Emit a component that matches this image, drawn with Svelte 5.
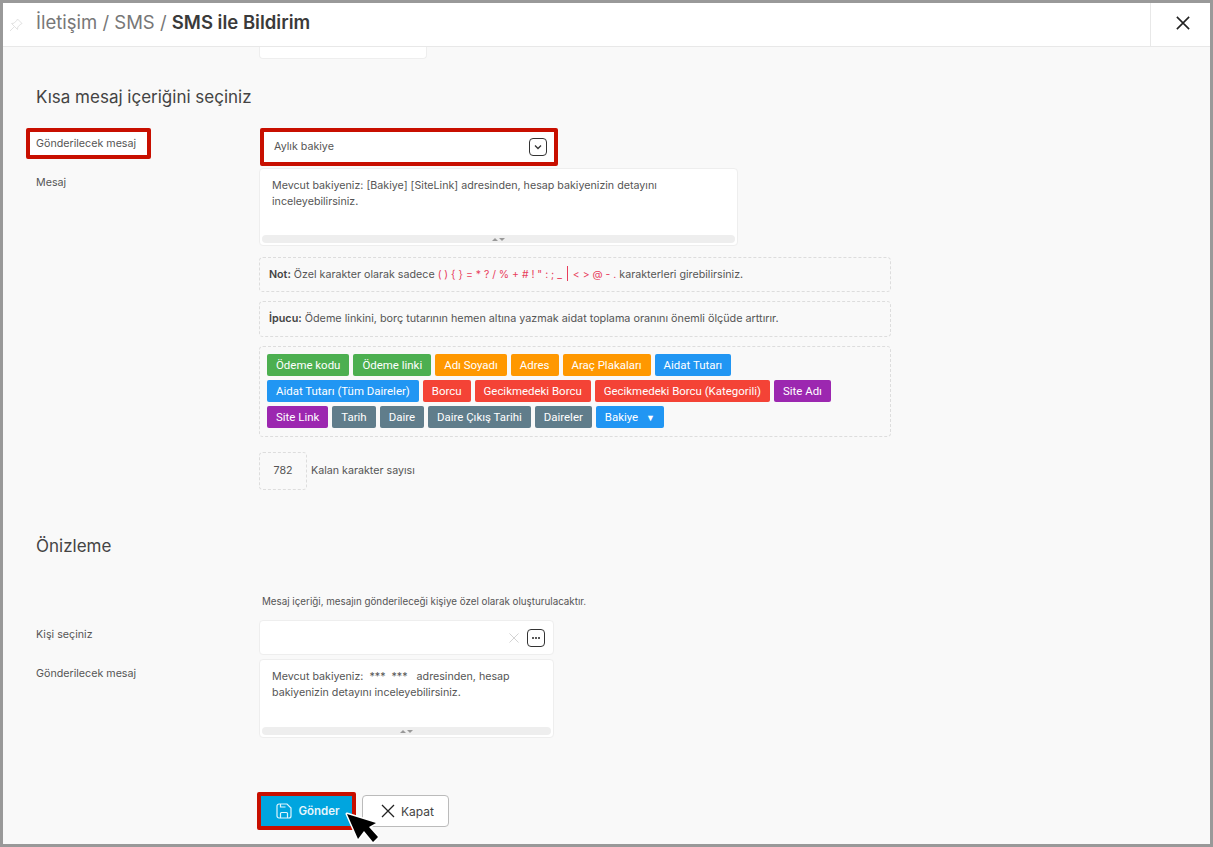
<script>
    const tags = [
        ['Ödeme kodu', 'green'], ['Ödeme linki', 'green'], ['Adı Soyadı', 'orange'], ['Adres', 'orange'],
        ['Araç Plakaları', 'orange'], ['Aidat Tutarı', 'blue'], ['Aidat Tutarı (Tüm Daireler)', 'blue'],
        ['Borcu', 'red'], ['Gecikmedeki Borcu', 'red'], ['Gecikmedeki Borcu (Kategorili)', 'red'],
        ['Site Adı', 'purple'], ['Site Link', 'purple'], ['Tarih', 'slate'], ['Daire', 'slate'],
        ['Daire Çıkış Tarihi', 'slate'], ['Daireler', 'slate']
    ];
</script>

<div class="window">
    <header class="head">
        <svg class="pin" width="14" height="14" viewBox="0 0 14 14" fill="none" stroke="#e2e2e2" stroke-width="1">
            <path d="M8.5 1 13 5.5 11.8 6 8.8 9 8.5 11.5 2.5 5.5 5 5.2 8 2.2Z M5 9 1 13" />
        </svg>
        <h1>İletişim / SMS / <b>SMS ile Bildirim</b></h1>
        <button class="close" aria-label="Kapat">
            <svg width="14" height="14" viewBox="0 0 16 16" stroke="#222" stroke-width="1.8"><path d="M1 1 15 15M15 1 1 15" /></svg>
        </button>
    </header>

    <main class="body">
        <div class="stub"></div>
        <h2 class="first">Kısa mesaj içeriğini seçiniz</h2>

        <div class="row top">
            <span class="lbl mark">Gönderilecek mesaj</span>
            <div class="select">
                <span>Aylık bakiye</span>
                <span class="ico">
                    <svg width="10" height="10" viewBox="0 0 10 10" fill="none" stroke="#333" stroke-width="1.3"><path d="M2 3.5 5 6.5 8 3.5" /></svg>
                </span>
            </div>
        </div>

        <div class="row">
            <span class="lbl">Mesaj</span>
            <div class="col">
                <div class="area wide">
                    <p>Mevcut bakiyeniz: [Bakiye] [SiteLink] adresinden, hesap bakiyenizin detayını inceleyebilirsiniz.</p>
                    <div class="grip"><i></i><i class="down"></i></div>
                </div>
                <div class="dash note"><b>Not:</b> Özel karakter olarak sadece <span class="code">( ) {'{ }'} = * ? / % + # ! " : ; _ <span class="bar"></span> &lt; &gt; @ - .</span> karakterleri girebilirsiniz.</div>
                <div class="dash note tip"><b>İpucu:</b> Ödeme linkini, borç tutarının hemen altına yazmak aidat toplama oranını önemli ölçüde arttırır.</div>
                <div class="dash tags">
                    {#each tags as [name, color]}
                        <span class="tag {color}">{name}</span>
                    {/each}
                    <span class="tag blue">Bakiye <em>▼</em></span>
                </div>
                <div class="count">
                    <div class="dash num">782</div>
                    <span>Kalan karakter sayısı</span>
                </div>
            </div>
        </div>

        <h2 class="second">Önizleme</h2>

        <div class="row">
            <span></span>
            <small>Mesaj içeriği, mesajın gönderileceği kişiye özel olarak oluşturulacaktır.</small>
        </div>

        <div class="row person">
            <span class="lbl">Kişi seçiniz</span>
            <div class="input">
                <svg width="10" height="10" viewBox="0 0 11 11" stroke="#d4d4d4" stroke-width="1.1"><path d="M.5.5 10.5 10.5M10.5.5.5 10.5" /></svg>
                <span class="ico dots"><i></i><i></i><i></i></span>
            </div>
        </div>

        <div class="row preview">
            <span class="lbl">Gönderilecek mesaj</span>
            <div class="area narrow">
                <p>Mevcut bakiyeniz: &nbsp;*** &nbsp;*** &nbsp;&nbsp;adresinden, hesap bakiyenizin detayını inceleyebilirsiniz.</p>
                <div class="grip"><i></i><i class="down"></i></div>
            </div>
        </div>

        <div class="row actions">
            <span></span>
            <div class="btns">
                <button class="send">
                    <svg width="16" height="16" viewBox="0 0 16 16" fill="none" stroke="#e0f5fd" stroke-width="1.2">
                        <path d="M3 1h8l4 4v8a2 2 0 0 1-2 2H3a2 2 0 0 1-2-2V3a2 2 0 0 1 2-2Z" />
                        <path d="M4.5 15v-4.5a1 1 0 0 1 1-1h5a1 1 0 0 1 1 1V15M4.5 1v3h5" />
                    </svg>
                    Gönder
                </button>
                <button class="shut">
                    <svg width="14" height="14" viewBox="0 0 14 14" stroke="#222" stroke-width="1.3"><path d="M1 1 13 13M13 1 1 13" /></svg>
                    Kapat
                </button>
            </div>
        </div>
    </main>

    <svg class="cursor" width="45" height="42" viewBox="0 0 45 42">
        <path d="M7 9 18 34 24 26 33 37 38 32 29 22 36 18Z" fill="#000" stroke="#fff" stroke-width="3" stroke-linejoin="round" paint-order="stroke" />
    </svg>
</div>

<style>
:global(body) {
    margin: 0;
}
.window {
    position: relative;
    box-sizing: border-box;
    width: 1213px;
    height: 847px;
    border: 3px solid #999;
    background: #f9f9f9;
    overflow: hidden;
    font-family: Inter, "Liberation Sans", sans-serif;
    font-size: 10.7px;
    color: #555;
}
.head {
    display: flex;
    align-items: center;
    height: 44px;
    box-sizing: border-box;
    background: #fff;
    border-bottom: 1px solid #e8e8e8;
}
.pin {
    margin: 0 13px 0 6px;
}
h1 {
    flex: 1;
    margin: 0 0 5px;
    font-size: 18.5px;
    font-weight: 400;
    color: #777;
}
h1 b {
    font-weight: 600;
    color: #3a3a3a;
}
.close {
    width: 60px;
    height: 43px;
    padding: 0 0 0 4px;
    background: none;
    border: none;
    border-left: 1px solid #e8e8e8;
}
.body {
    padding-left: 33px;
}
.stub {
    box-sizing: border-box;
    width: 168px;
    height: 12px;
    margin-left: 223px;
    background: #fff;
    border: 1px solid #eee;
    border-top: none;
    border-radius: 0 0 4px 4px;
}
h2 {
    margin: 0;
    font-size: 17px;
    font-weight: 400;
    color: #444;
    line-height: 20px;
}
.first {
    margin-top: 28px;
    margin-bottom: 21px;
}
.second {
    margin-top: 46px;
    margin-bottom: 40px;
}
.row {
    display: grid;
    grid-template-columns: 223px auto;
    justify-content: start;
}
.lbl {
    padding-top: 8px;
    line-height: 14px;
}
.top {
    margin-bottom: 2px;
}
.mark {
    box-sizing: content-box;
    align-self: start;
    justify-self: start;
    height: 14px;
    margin-left: -10px;
    padding: 5px 11px 4px 6px;
    border: 4px solid #c80f00;
    border-radius: 2px;
    background: #fff;
}
.select {
    box-sizing: border-box;
    display: flex;
    align-items: center;
    justify-content: space-between;
    width: 298px;
    height: 38px;
    margin-left: 1px;
    padding: 0 7px 0 9px;
    background: #fff;
    border: 4px solid #c80f00;
    border-radius: 2px;
}
.select > span:first-child {
    margin: 0 0 2px 1px;
}
.ico {
    box-sizing: border-box;
    display: flex;
    align-items: center;
    justify-content: center;
    gap: 1px;
    width: 18px;
    height: 18px;
    border: 1.5px solid #333;
    border-radius: 4px;
}
.dots i {
    width: 2px;
    height: 2px;
    background: #222;
    border-radius: 50%;
}
.col {
    display: flex;
    flex-direction: column;
    align-items: flex-start;
}
.area {
    box-sizing: border-box;
    display: flex;
    flex-direction: column;
    padding: 2px;
    background: #fff;
    border: 1px solid #eee;
    border-radius: 4px;
}
.area p {
    flex: 1;
    margin: 0;
    padding: 7px 10px;
    line-height: 16px;
    color: #555;
}
.wide {
    width: 479px;
    height: 78px;
}
.narrow {
    width: 295px;
    height: 79px;
}
.grip {
    display: flex;
    align-items: center;
    justify-content: center;
    gap: 1px;
    height: 8px;
    background: #eee;
    border-radius: 4px;
}
.grip i {
    border-left: 3px solid transparent;
    border-right: 3px solid transparent;
    border-bottom: 3px solid #999;
}
.grip .down {
    border-bottom: none;
    border-top: 3px solid #999;
}
.dash {
    box-sizing: border-box;
    border: 1px dashed #ddd;
    border-radius: 4px;
}
.note {
    width: 632px;
    height: 35px;
    margin-top: 11px;
    padding: 8px 9px;
    line-height: 16px;
}
.note b {
    font-weight: 600;
    color: #444;
}
.tip {
    height: 36px;
    margin-top: 9px;
    padding-top: 9px;
    font-size: 10.8px;
}
.code {
    color: #e83e5c;
    font-size: 10.45px;
}
.bar {
    display: inline-block;
    width: 1px;
    height: 15px;
    background: #e83e5c;
    vertical-align: -3px;
    margin: 0 2px;
}
.tags {
    display: flex;
    flex-wrap: wrap;
    gap: 4px;
    width: 632px;
    height: 91px;
    margin-top: 9px;
    padding: 7px 12px 7px 7px;
    align-content: flex-start;
}
.tag {
    display: block;
    height: 22px;
    padding: 0 9px;
    line-height: 22px;
    border-radius: 2px;
    color: #fff;
    font-family: Roboto, sans-serif;
    font-size: 11.45px;
    font-weight: 400;
}
.tag em {
    font-style: normal;
    font-size: 9px;
    margin-left: 5px;
}
.green { background: #4caf50; }
.orange { background: #ff9800; }
.blue { background: #2196f3; }
.red { background: #f44336; }
.purple { background: #9c27b0; }
.slate { background: #607d8b; }
.count {
    display: flex;
    align-items: center;
    gap: 4px;
    margin-top: 15px;
}
.count span {
    margin-bottom: 2px;
}
.num {
    width: 48px;
    height: 38px;
    line-height: 35px;
    text-align: center;
}
small {
    font-size: 9.8px;
    line-height: 12px;
    margin-left: 3px;
}
.person {
    margin-top: 12px;
    margin-bottom: 4px;
}
.input {
    box-sizing: border-box;
    display: flex;
    align-items: center;
    justify-content: flex-end;
    gap: 8px;
    width: 295px;
    height: 35px;
    padding-right: 8px;
    background: #fff;
    border: 1px solid #eee;
    border-radius: 4px;
}
.actions {
    margin-top: 54px;
}
.btns {
    display: flex;
    align-items: center;
    gap: 6px;
    margin-left: -2px;
}
button {
    font-family: Inter, sans-serif;
}
.btns button {
    box-sizing: border-box;
    display: flex;
    align-items: center;
    justify-content: center;
    font-size: 12px;
}
.send {
    gap: 6px;
    width: 99px;
    height: 38px;
    padding: 0 0 0 3px;
    background: #00a5df;
    border: 4px solid #c80f00;
    border-radius: 2px;
    color: #e6f6fc;
    font-weight: 600;
}
.btns .send {
    font-size: 11.5px;
}
.shut {
    gap: 6px;
    width: 87px;
    height: 32px;
    padding: 0 0 0 4px;
    background: #fff;
    border: 1px solid #bbb;
    border-radius: 4px;
    color: #444;
}
.cursor {
    position: absolute;
    left: 337px;
    top: 802px;
}
</style>
